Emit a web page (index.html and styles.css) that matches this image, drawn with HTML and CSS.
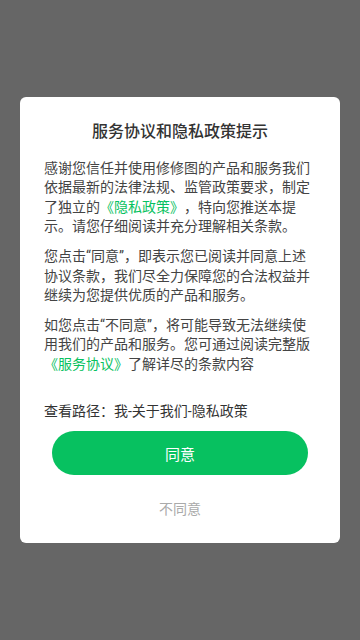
FILE: index.html
```html
<!DOCTYPE html>
<html lang="zh-CN">
<head>
  <meta charset="UTF-8">
  <meta name="viewport" content="width=device-width, initial-scale=1.0">
  <title>服务协议和隐私政策提示</title>
  <link rel="stylesheet" href="styles.css">
</head>
<body>
  <div class="mask">
    <div class="dialog">
      <h2 class="dialog-title">服务协议和隐私政策提示</h2>
      <p class="dialog-text">感谢您信任并使用修修图的产品和服务我们依据最新的法律法规、监管政策要求，制定了独立的<a href="#">《隐私政策》</a>，特向您推送本提示。请您仔细阅读并充分理解相关条款。</p>
      <p class="dialog-text">您点击“同意”，即表示您已阅读并同意上述协议条款，我们尽全力保障您的合法权益并继续为您提供优质的产品和服务。</p>
      <p class="dialog-text">如您点击“不同意”，将可能导致无法继续使用我们的产品和服务。您可通过阅读完整版<a href="#">《服务协议》</a>了解详尽的条款内容</p>
      <p class="dialog-path">查看路径：我-关于我们-隐私政策</p>
      <button class="btn-agree">同意</button>
      <button class="btn-disagree">不同意</button>
    </div>
  </div>
</body>
</html>
```

FILE: styles.css
```css
* {
  margin: 0;
  padding: 0;
  box-sizing: border-box;
}

body {
  font-family: Roboto, "Noto Sans CJK SC", sans-serif;
  background-color: #666;
  color: #333;
  text-spacing-trim: space-all;
}

.mask {
  display: flex;
  justify-content: center;
  align-items: center;
  min-height: 100vh;
  padding: 0 20px;
}

.dialog {
  background: #fff;
  border-radius: 6px;
  width: 100%;
  padding: 24px 24px 24px;
  display: flex;
  flex-direction: column;
}

.dialog-title {
  font-size: 16px;
  font-weight: 500;
  line-height: 22px;
  text-align: center;
  color: #333;
  margin-bottom: 16px;
}

.dialog-text {
  font-size: 14px;
  line-height: 19.6px;
  color: #444;
  margin-bottom: 10px;
}

.dialog-text a {
  color: #07c160;
  text-decoration: none;
}

.dialog-path {
  font-size: 14px;
  line-height: 20px;
  color: #333;
  margin-top: 17px;
}

.btn-agree {
  align-self: center;
  width: 256px;
  height: 44px;
  margin-top: 10px;
  border: none;
  border-radius: 22px;
  background: #07c160;
  color: #fff;
  font-family: inherit;
  font-size: 15px;
  cursor: pointer;
}

.btn-disagree {
  align-self: center;
  margin-top: 24px;
  border: none;
  background: none;
  color: #aaa;
  font-family: inherit;
  font-size: 14px;
  line-height: 20px;
  cursor: pointer;
}
```
